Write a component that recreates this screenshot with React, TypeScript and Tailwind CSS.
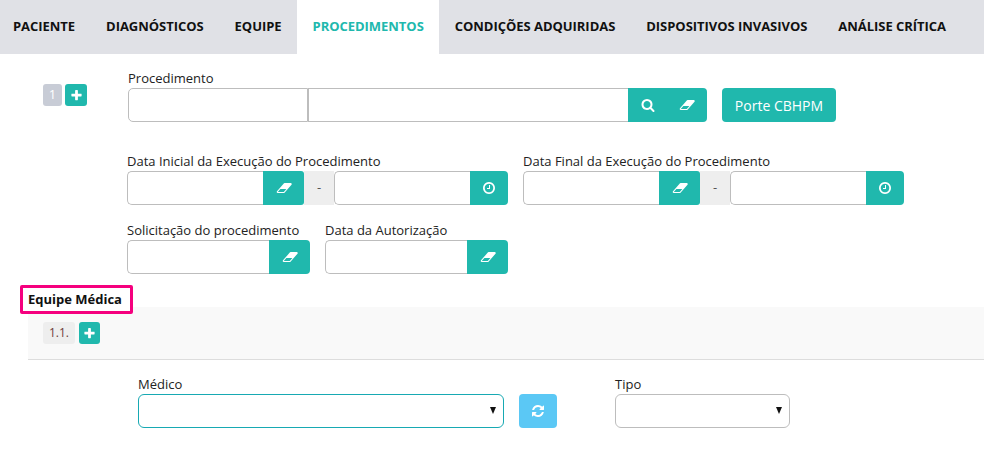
const tabs = ["PACIENTE", "DIAGNÓSTICOS", "EQUIPE", "PROCEDIMENTOS", "CONDIÇÕES ADQUIRIDAS", "DISPOSITIVOS INVASIVOS", "ANÁLISE CRÍTICA"];

// font-awesome 4 glyphs
const icons = {
  plus: "M1600 736v192q0 40-28 68t-68 28h-416v416q0 40-28 68t-68 28h-192q-40 0-68-28t-28-68v-416h-416q-40 0-68-28t-28-68v-192q0-40 28-68t68-28h416v-416q0-40 28-68t68-28h192q40 0 68 28t28 68v416h416q40 0 68 28t28 68z",
  search: "M1216 832q0-185-131.5-316.5t-316.5-131.5-316.5 131.5-131.5 316.5 131.5 316.5 316.5 131.5 316.5-131.5 131.5-316.5zm512 832q0 52-38 90t-90 38q-54 0-90-38l-343-342q-179 124-399 124-143 0-273.5-55.5t-225-150-150-225-55.5-273.5 55.5-273.5 150-225 225-150 273.5-55.5 273.5 55.5 225 150 150 225 55.5 273.5q0 220-124 399l343 343q37 37 37 90z",
  clock: "M1024 544v448q0 14-9 23t-23 9h-320q-14 0-23-9t-9-23v-64q0-14 9-23t23-9h224v-352q0-14 9-23t23-9h64q14 0 23 9t9 23zm416 352q0-148-73-273t-198-198-273-73-273 73-198 198-73 273 73 273 198 198 273 73 273-73 198-198 73-273zm224 0q0 209-103 385.5t-279.5 279.5-385.5 103-385.5-103-279.5-279.5-103-385.5 103-385.5 279.5-279.5 385.5-103 385.5 103 279.5 279.5 103 385.5z",
  refresh: "M1639 1056q0 5-1 7-64 268-268 434.5t-478 166.5q-146 0-282.5-55t-243.5-157l-129 129q-19 19-45 19t-45-19-19-45v-448q0-26 19-45t45-19h448q26 0 45 19t19 45-19 45l-137 137q71 66 161 102t187 36q134 0 250-65t186-179q11-17 53-117 8-23 30-23h192q13 0 22.5 9.5t9.5 22.5zm25-800v448q0 26-19 45t-45 19h-448q-26 0-45-19t-19-45 19-45l138-138q-148-137-349-137-134 0-250 65t-186 179q-11 17-53 117-8 23-30 23h-199q-13 0-22.5-9.5t-9.5-22.5v-7q65-268 270-434.5t480-166.5q146 0 284 55.5t245 156.5l130-129q19-19 45-19t45 19 19 45z",
};

function Icon({ name, className = "w-[14px] h-[14px]" }: { name: keyof typeof icons; className?: string }) {
  return (
    <svg viewBox="0 0 1792 1792" className={`fill-white shrink-0 ${className}`}>
      <path d={icons[name]} />
    </svg>
  );
}

function Eraser({ className = "" }: { className?: string }) {
  return (
    <svg viewBox="0 0 1984 1792" className={`w-[16px] h-[14px] fill-white shrink-0 ${className}`}>
      <path d="M960 1408l336-384h-768l-336 384h768zm1013-1077q15 34 9.5 71.5t-30.5 65.5l-896 1024q-38 44-96 44h-768q-38 0-69.5-20.5t-47.5-54.5q-15-34-9.5-71.5t30.5-65.5l896-1024q38-44 96-44h768q38 0 70 20.5t47 54.5z" />
    </svg>
  );
}

function AddButton({ width = "w-[22px]" }: { width?: string }) {
  return (
    <button className={`${width} h-[22px] rounded-[3px] bg-[#20b8ad] flex items-center justify-center`}>
      <Icon name="plus" className="w-[13px] h-[13px]" />
    </button>
  );
}

function Label({ text }: { text: string }) {
  return <label className="block h-[19px] leading-[18px] text-[13px] text-[#222]">{text}</label>;
}

function SelectField({ width, border }: { width: string; border: string }) {
  return (
    <div className={`relative ${width} h-[34px]`}>
      <select className={`appearance-none w-full h-full border ${border} rounded-[6px] bg-white`} />
      <svg viewBox="0 0 6 7" className="absolute right-[8px] top-[13px] w-[6px] h-[7px] fill-[#111]">
        <polygon points="0,0 6,0 3,7" />
      </svg>
    </div>
  );
}

function EraserField() {
  return (
    <div className="flex h-[34px]">
      <input className="w-[142px] h-full border border-[#bdbdbd] border-r-0 rounded-l-[5px] bg-white" />
      <button className="w-[41px] h-full bg-[#20b8ad] rounded-r-[4px] flex items-center justify-center">
        <Eraser />
      </button>
    </div>
  );
}

function DateRange({ label }: { label: string }) {
  return (
    <div className="w-[381px]">
      <Label text={label} />
      <div className="flex h-[34px]">
        <input className="w-[136px] h-full border border-[#bdbdbd] border-r-0 rounded-l-[5px] bg-white" />
        <button className="w-[41px] h-full bg-[#20b8ad] flex items-center justify-center rounded-r-[3px]">
          <Eraser />
        </button>
        <span className="w-[30px] h-full bg-[#eeeeee] flex items-center justify-center text-[13px] text-[#555]">-</span>
        <input className="w-[136px] h-full border border-[#bdbdbd] border-r-0 rounded-l-[5px] bg-white" />
        <button className="w-[38px] h-full bg-[#20b8ad] rounded-r-[4px] flex items-center justify-center">
          <Icon name="clock" />
        </button>
      </div>
    </div>
  );
}

export default function App() {
  return (
    <div className="w-[984px] h-[465px] overflow-hidden bg-white font-['Open_Sans',sans-serif]">
      {/* Tabs */}
      <nav className="flex h-[54px] bg-[#e0e1e6] pl-[13px]">
        {tabs.map((tab, i) => (
          <a
            key={tab}
            className={`flex items-center text-[13px] font-bold tracking-[-0.04px] whitespace-nowrap ${
              i === 0 ? "pr-[15.5px]" : "px-[15.5px]"
            } ${tab === "PROCEDIMENTOS" ? "bg-white text-[#20b8ad]" : "text-[#111]"}`}
          >
            {tab}
          </a>
        ))}
      </nav>

      {/* Procedimento */}
      <section className="flex pt-[15px] pl-[43px]">
        <div className="flex gap-[3px] w-[85px] pt-[15px]">
          <span className="w-[19px] h-[22px] rounded-[3px] bg-[#c8ccd6] text-white text-[13px] flex items-center justify-center">1</span>
          <AddButton />
        </div>
        <div>
          <Label text="Procedimento" />
          <div className="flex h-[34px]">
            <input className="w-[180px] h-full border border-[#bdbdbd] rounded-l-[5px] bg-white" />
            <input className="w-[320px] h-full border border-[#bdbdbd] border-r-0 bg-white" />
            <div className="w-[79px] h-full bg-[#20b8ad] rounded-r-[4px] flex items-center">
              <Icon name="search" className="w-[14px] h-[14px] ml-[13px]" />
              <Eraser className="ml-[24px]" />
            </div>
            <button className="ml-[15px] w-[114px] h-full bg-[#20b8ad] rounded-[4px] text-white text-[14px]">Porte CBHPM</button>
          </div>
        </div>
      </section>

      {/* Datas */}
      <section className="flex gap-[15px] pl-[127px] pt-[30px]">
        <DateRange label="Data Inicial da Execução do Procedimento" />
        <DateRange label="Data Final da Execução do Procedimento" />
      </section>

      <section className="flex gap-[15px] pl-[127px] pt-[16px]">
        <div>
          <Label text="Solicitação do procedimento" />
          <EraserField />
        </div>
        <div>
          <Label text="Data da Autorização" />
          <EraserField />
        </div>
      </section>

      {/* Equipe Medica */}
      <div className="relative z-10 ml-[20px] mt-[11px] w-[113px] h-[29px] border-[3px] border-[#f5007e] rounded-[2px] bg-white flex items-center pl-[5px]">
        <h3 className="text-[13px] font-bold text-[#111] whitespace-nowrap">Equipe Médica</h3>
      </div>
      <div className="-mt-[7px] ml-[28px] h-[53px] bg-[#f9f9f9] border-b border-[#dddddd] pl-[15px] pt-[15px] flex gap-[4px] items-start">
        <span className="w-[32px] h-[22px] rounded-[3px] bg-[#eeeeee] text-[#6e3b3b] text-[12px] flex items-center justify-center">1.1.</span>
        <AddButton width="w-[21px]" />
      </div>

      <section className="flex pl-[138px] pt-[15px]">
        <div>
          <Label text="Médico" />
          <SelectField width="w-[366px]" border="border-[#17a9b3]" />
        </div>
        <button className="ml-[15px] mt-[19px] w-[38px] h-[34px] rounded-[4px] bg-[#5bc8f5] flex items-center justify-center">
          <Icon name="refresh" />
        </button>
        <div className="ml-[58px]">
          <Label text="Tipo" />
          <SelectField width="w-[175px]" border="border-[#bdbdbd]" />
        </div>
      </section>
    </div>
  );
}
